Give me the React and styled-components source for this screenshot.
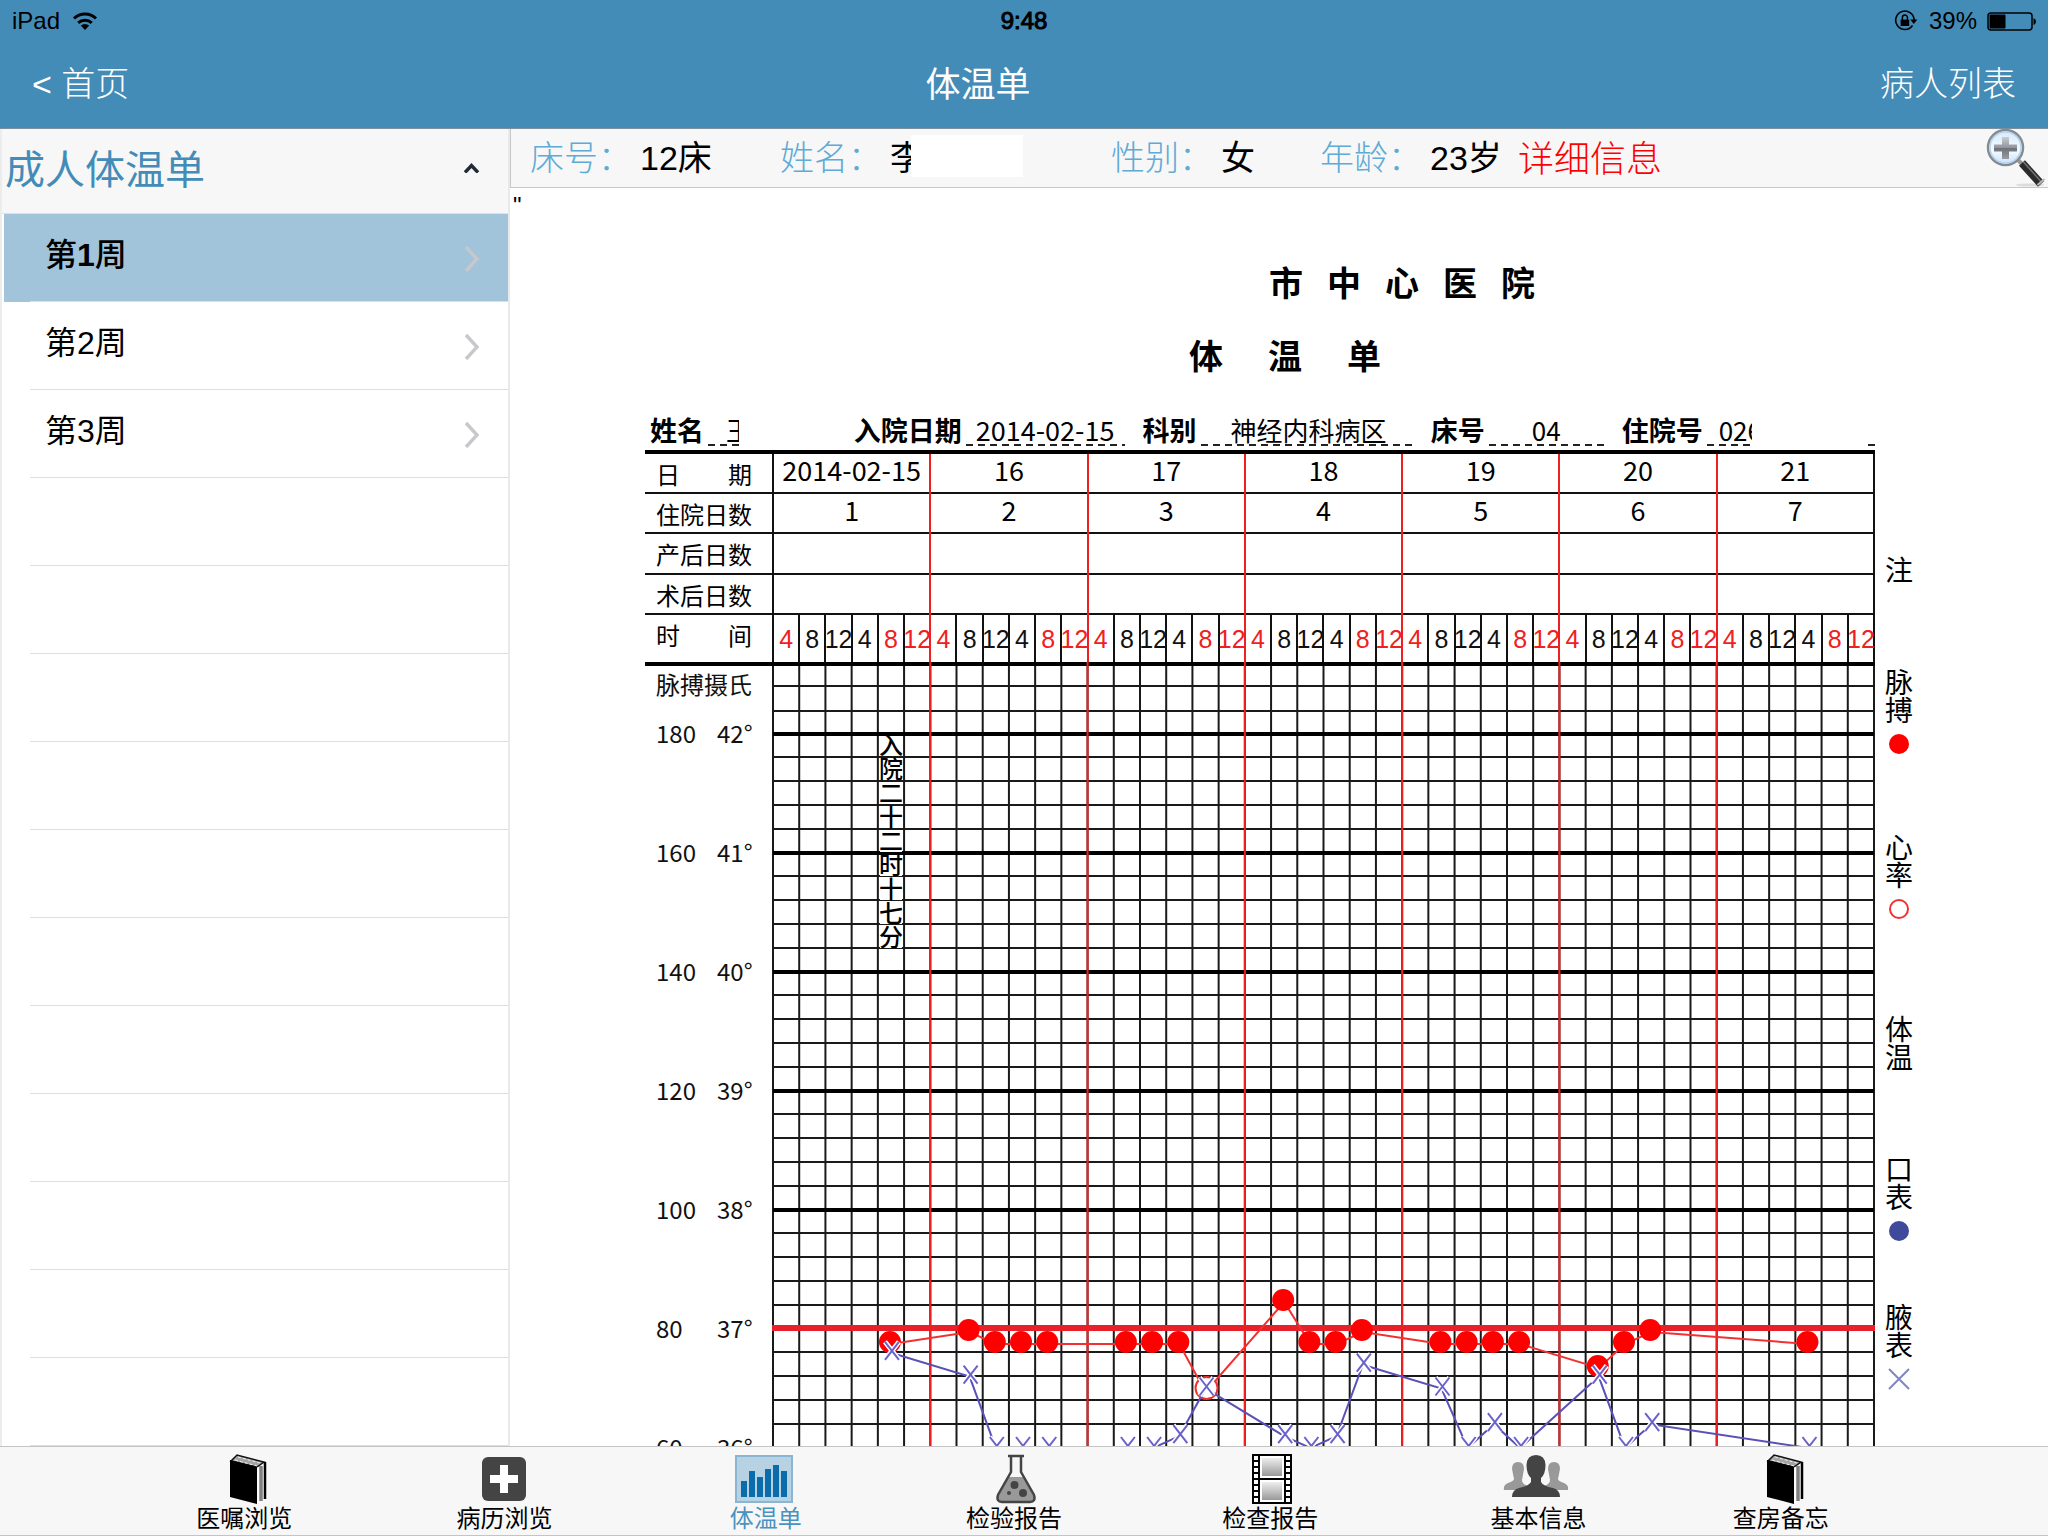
import React, { useState } from "react";
import styled, { createGlobalStyle } from "styled-components";

const weeks = [1, 2, 3];
const emptyRows = 11;

const days = ["2014-02-15", "16", "17", "18", "19", "20", "21"];
const hours = ["4", "8", "12", "4", "8", "12"];
const redHours = [0, 4, 5];

// [slot, value], six slots per day
const pulse = [
  [4, 78], [7, 80], [8, 78], [9, 78], [10, 78], [13, 78], [14, 78], [15, 78],
  [16, 70], [19, 85], [20, 78], [21, 78], [22, 80], [25, 78], [26, 78],
  [27, 78], [28, 78], [31, 74], [32, 78], [33, 80], [39, 78],
];
const temps = [
  [4, 36.8], [7, 36.6], [8, 36], [9, 36], [10, 36], [13, 36], [14, 36],
  [15, 36.1], [16, 36.5], [19, 36.1], [20, 36], [21, 36.1], [22, 36.7],
  [25, 36.5], [26, 36], [27, 36.2], [28, 36], [31, 36.6], [32, 36],
  [33, 36.2], [39, 36],
];

const tabs = [
  { name: "医嘱浏览", icon: "book" },
  { name: "病历浏览", icon: "plus" },
  { name: "体温单", icon: "bars" },
  { name: "检验报告", icon: "flask" },
  { name: "检查报告", icon: "film" },
  { name: "基本信息", icon: "people" },
  { name: "查房备忘", icon: "book" },
];

const GlobalStyle = createGlobalStyle`
  * {
    box-sizing: border-box;
  }
  body {
    margin: 0;
    font-family: "Liberation Sans", "Noto Sans CJK SC", sans-serif;
    color: #000;
    background: #fff;
  }
  button {
    font: inherit;
    color: inherit;
    background: none;
    border: 0;
    padding: 0;
    cursor: pointer;
  }
  a {
    text-decoration: none;
  }
`;

const Page = styled.div`
  display: flex;
  flex-direction: column;
  height: 100vh;
  overflow: hidden;
`;

const TopBar = styled.header`
  background: #438cb8;
  border-bottom: 1px solid #7d8f9b;
`;

const StatusBar = styled.div`
  display: grid;
  grid-template-columns: 1fr auto 1fr;
  align-items: center;
  height: 42px;
  padding: 0 12px;
  font-size: 24px;
`;

const StatusGroup = styled.div`
  display: flex;
  align-items: center;
  justify-content: ${(props) => (props.$end ? "flex-end" : "flex-start")};
  gap: ${(props) => (props.$end ? "10px" : "12px")};
`;

const Clock = styled.span`
  -webkit-text-stroke: 1px #000;
`;

const NavBar = styled.nav`
  display: grid;
  grid-template-columns: 1fr auto 1fr;
  align-items: center;
  height: 86px;
  padding: 0 32px 8px;
  font-size: 34px;
  font-weight: 300;
  color: #fff;
`;

const NavTitle = styled.h1`
  margin: 0;
  padding-right: 92px;
  font-size: 35px;
  font-weight: 400;
`;

const NavLink = styled.a`
  color: #fff;
  justify-self: ${(props) => (props.$end ? "end" : "start")};
`;

const Body = styled.div`
  display: flex;
  flex: 1;
  min-height: 0;
`;

const Sidebar = styled.aside`
  flex: 0 0 510px;
  display: flex;
  flex-direction: column;
  overflow: hidden;
  border-left: 2px solid #ececec;
  border-right: 2px solid #e9e9e9;
`;

const GroupHeader = styled.button`
  flex: 0 0 85px;
  display: flex;
  align-items: center;
  justify-content: space-between;
  padding: 0 28px 8px 3px;
  font-size: 40px;
  color: #438cb8;
  background: #f7f7f7;
  border-bottom: 1px solid #e0e0e0;
`;

const WeekList = styled.ul`
  margin: 0;
  padding: 0 0 0 2px;
  list-style: none;
`;

const WeekRow = styled.li`
  display: flex;
  height: 88px;
  padding-left: 26px;
  background: ${(props) => (props.$active ? "#a2c4da" : "#fff")};
`;

const WeekButton = styled.button`
  flex: 1;
  display: flex;
  align-items: center;
  justify-content: space-between;
  padding: 0 27px 0 15px;
  font-size: 32px;
  font-weight: ${(props) => (props.$active ? 500 : 400)};
  border-bottom: 1px solid #dedee0;
`;

const EmptyRow = styled(WeekRow)`
  &::before {
    content: "";
    flex: 1;
    border-bottom: 1px solid #dedee0;
  }
`;

const WeekName = styled.span`
  padding-bottom: 12px;
`;

const Content = styled.main`
  flex: 1;
  min-width: 0;
  display: flex;
  flex-direction: column;
  overflow: hidden;
`;

const PatientBar = styled.section`
  flex: 0 0 59px;
  display: flex;
  align-items: center;
  padding: 0 2px 0 19px;
  font-size: 34px;
  background: #f7f7f7;
  border-left: 1px solid #c8c8c8;
  border-bottom: 1px solid #c8c8c8;
`;

const Item = styled.dl`
  display: flex;
  align-items: center;
  margin: 0;
  padding-bottom: 5px;
  min-width: ${(props) => props.$width}px;
  white-space: nowrap;
`;

const ItemLabel = styled.dt`
  width: 110px;
  font-weight: 300;
  color: #5eabd6;
`;

const ItemValue = styled.dd`
  margin: 0;
  ${(props) => props.$clip && `width: ${props.$clip}px; overflow: hidden;`}
`;

const Redacted = styled.span`
  width: 112px;
  height: 42px;
  background: #fff;
`;

const DetailLink = styled.a`
  padding-bottom: 5px;
  font-size: 36px;
  font-weight: 300;
  color: #f00;
`;

const ZoomButton = styled.button`
  display: flex;
  align-self: flex-start;
  margin-left: auto;
`;

const Stray = styled.div`
  flex: 0 0 31px;
  padding: 6px 0 0 3px;
  font-size: 24px;
  line-height: 24px;
`;

const SheetRow = styled.div`
  display: flex;
  align-items: flex-start;
  min-height: 0;
  padding-left: 135px;
`;

const Sheet = styled.section`
  flex: 1;
  min-width: 0;
  padding-top: 39px;
  font-family: "Noto Sans CJK SC", "Noto Sans", sans-serif;
`;

const SheetTitle = styled.h2`
  display: flex;
  justify-content: center;
  gap: ${(props) => props.$gap}px;
  margin: 0 0 ${(props) => props.$after}px;
  padding-left: ${(props) => props.$shift}px;
  font-size: 34px;
  line-height: 48px;
  font-weight: 700;
`;

const Fields = styled.div`
  display: flex;
  height: 36px;
  padding-left: 5px;
  font-size: 26px;
  line-height: 32px;
  white-space: nowrap;
`;

const FieldLabel = styled.span`
  font-size: 27px;
  font-weight: 700;
`;

const FieldValue = styled.span`
  width: ${(props) => props.$width}px;
  height: 32px;
  padding-left: ${(props) => props.$indent}px;
  margin-right: ${(props) => props.$after}px;
  font-size: ${(props) => (props.$digits ? 27 : 26)}px;
  overflow: ${(props) => (props.$clip ? "hidden" : "visible")};
  background: repeating-linear-gradient(90deg, #222 0 7px, #fff 7px 12px) 4px
    100% / 100% 2px no-repeat;
`;

const HeadTable = styled.table`
  display: block;
  border-top: 4px solid #000;
  font-size: 27px;
  tbody {
    display: block;
  }
`;

const HeadRow = styled.tr`
  display: grid;
  grid-template-columns: 127px repeat(42, 1fr);
  height: ${(props) => props.$height}px;
  border-bottom: ${(props) => (props.$last ? "0" : "2px")} solid #111;
  padding-right: 2px;
  background: linear-gradient(#111, #111) 100% 0 / 2px 100% no-repeat;
`;

const RowName = styled.th`
  padding: 2px 0 0 11px;
  font-size: 24px;
  line-height: 36px;
  font-weight: 400;
  text-align: left;
  white-space: pre;
`;

const DayCell = styled.td`
  grid-column: span 6;
  margin-bottom: -2px;
  padding: 0;
  border-left: 2px solid ${(props) => (props.$first ? "#111" : "#f02020")};
  line-height: 32px;
  text-align: center;
`;

const HourCell = styled.td`
  display: flex;
  justify-content: center;
  padding: 0;
  min-width: 0;
  border-left: 2px solid ${(props) => (props.$day ? "#f02020" : "#111")};
  color: ${(props) => (props.$red ? "#f02020" : "#111")};
  font-family: "Liberation Sans", sans-serif;
  font-size: 25px;
  line-height: 49px;
  white-space: nowrap;
`;

const Chart = styled.svg`
  display: block;
  width: 100%;
  height: auto;
`;

const VerticalNote = styled.text`
  writing-mode: vertical-rl;
  dominant-baseline: central;
  font-size: 24px;
  font-weight: 500;
`;

const Legend = styled.ul`
  flex: 0 0 173px;
  margin: 0;
  padding: 252px 0 0 8px;
  list-style: none;
  font-family: "Noto Sans CJK SC", sans-serif;
  font-size: 28px;
  line-height: 28px;
`;

const LegendItem = styled.li`
  display: flex;
  flex-direction: column;
  align-items: center;
  width: 32px;
  height: ${(props) => props.$height}px;
  margin-top: ${(props) => props.$gap}px;
  svg {
    margin-top: 10px;
  }
`;

const Vertical = styled.span`
  width: 28px;
  word-break: break-all;
`;

const TabBar = styled.nav`
  flex: 0 0 90px;
  display: grid;
  grid-template-columns: 260fr 260fr 262fr 234fr 278fr 258fr 226fr;
  padding: 0 154px 0 114px;
  background: #f7f7f7;
  border-top: 1px solid #c4c4c4;
  border-bottom: 1px solid #c4c4c4;
`;

const Tab = styled.button`
  display: flex;
  flex-direction: column;
  align-items: center;
  padding-top: 7px;
  font-size: 24px;
  line-height: 30px;
  color: ${(props) => (props.$active ? "#4a93c0" : "#000")};
  svg {
    display: block;
    overflow: visible;
  }
`;

const Wifi = () => (
  <svg width="26" height="20" viewBox="0 0 26 20" fill="none" stroke="#000">
    <path d="M2 7.5a16 16 0 0 1 22 0" strokeWidth="3" />
    <path d="M6.2 11.8a10 10 0 0 1 13.6 0" strokeWidth="3" />
    <path d="M13 19l-4.2-4.4a6 6 0 0 1 8.4 0z" fill="#000" stroke="none" />
  </svg>
);

const RotationLock = () => (
  <svg width="25" height="22" viewBox="0 0 25 22" fill="none" stroke="#000">
    <path d="M18.5 15.5a9.2 9.2 0 1 1 1.6-5" strokeWidth="1.6" />
    <path d="M16.2 9.6h7.2l-3.6 4.4z" fill="#000" stroke="none" />
    <rect x="6.6" y="9.6" width="8.6" height="6.4" fill="#000" stroke="none" />
    <path d="M8.4 10V7.6a2.5 2.5 0 0 1 5 0V10" strokeWidth="1.5" />
  </svg>
);

const Battery = () => (
  <svg width="49" height="19" viewBox="0 0 49 19">
    <rect x="1" y="1" width="44" height="17" rx="3" fill="none" stroke="#000" strokeWidth="1.5" />
    <rect x="2.5" y="2.5" width="16" height="14" rx="1" fill="#000" />
    <path d="M46.5 6q2.5 1 2.5 3.5t-2.5 3.5z" />
  </svg>
);

const Chevron = () => (
  <svg width="18" height="28" viewBox="0 0 18 28" fill="none" stroke="#c7c7cc" strokeWidth="3.4">
    <path d="M3 3l11 12L3 27" />
  </svg>
);

const Caret = () => (
  <svg width="17" height="12" viewBox="0 0 17 12" fill="none" stroke="#222b35" strokeWidth="3.4">
    <path d="M2 11.5l6.5-7 6.5 7" />
  </svg>
);

const Magnifier = () => (
  <svg width="60" height="58" viewBox="0 0 60 58">
    <defs>
      <linearGradient id="lens" x1="0" y1="0" x2="0" y2="1">
        <stop offset="0" stopColor="#d5e9fb" />
        <stop offset="0.6" stopColor="#f4faff" />
        <stop offset="1" stopColor="#c4e0fa" />
      </linearGradient>
      <linearGradient id="cross" x1="0" y1="0" x2="0" y2="1">
        <stop offset="0" stopColor="#c9ccd0" />
        <stop offset="0.5" stopColor="#90949a" />
        <stop offset="0.51" stopColor="#6d7278" />
        <stop offset="1" stopColor="#9a9ea4" />
      </linearGradient>
    </defs>
    <ellipse cx="44" cy="56" rx="14" ry="1.6" fill="#ddd" />
    <path d="M32 31l5 5" stroke="#999" strokeWidth="4" />
    <path d="M36 34l19 21" stroke="#2b2b2b" strokeWidth="8" />
    <path d="M37.5 33l17 19" stroke="#777" strokeWidth="1.5" />
    <path d="M51.5 56l7-6" stroke="#bbb" strokeWidth="2" />
    <circle cx="19.5" cy="18.5" r="17.5" fill="url(#lens)" stroke="#858b93" strokeWidth="2.5" />
    <circle cx="19.5" cy="18.5" r="15.5" fill="none" stroke="#b7d4ee" strokeWidth="1.5" />
    <path d="M16 8h7v7.5h8v7h-8V30h-7v-7.5H8v-7h8z" fill="url(#cross)" />
  </svg>
);

const TabIcon = ({ name }) => {
  if (name === "book") {
    return (
      <svg width="46" height="50" viewBox="0 0 46 50">
        <path d="M9 7l8-6 26 7v36l-8 6L9 43z" fill="#f7f7f7" />
        <path d="M10 7l6-6 27 7-7 5z" fill="#a5a5a5" stroke="#111" strokeWidth="1.5" />
        <path d="M14 6l22 6M17 3l22 6" stroke="#eee" strokeWidth="1" strokeDasharray="3 2" />
        <path d="M9 6l27 7v37L9 43z" />
        <path d="M37.5 13v36" stroke="#fff" strokeWidth="2" />
        <path d="M40 12v35" stroke="#808080" strokeWidth="3.5" />
        <path d="M44 8v37" stroke="#000" strokeWidth="2.5" />
      </svg>
    );
  }
  if (name === "plus") {
    return (
      <svg width="46" height="50" viewBox="0 0 46 50">
        <rect x="1" y="3" width="44" height="44" rx="6" fill="#444" />
        <path d="M19 11h8v10h10v8H27v10h-8V29H9v-8h10z" fill="#fff" />
      </svg>
    );
  }
  if (name === "bars") {
    return (
      <svg width="62" height="50" viewBox="0 0 62 50">
        <rect x="1" y="2" width="56" height="46" fill="#b6d2e3" stroke="#8ab6d3" strokeWidth="2" />
        <path
          d="M6 27h6v16H6zM14 17h6v26h-6zM22 23h6v20h-6zM30 15h6v28h-6zM38 11h6v32h-6zM46 17h6v26h-6z"
          fill="#0a6cab"
        />
      </svg>
    );
  }
  if (name === "flask") {
    return (
      <svg width="36" height="50" viewBox="0 0 36 50">
        <path d="M13 23h14l11 20q2 5-4 5H6q-6 0-4-5z" fill="#999" />
        <path d="M12 2h16M15 2v16L2 41q-2 7 4 7h28q6 0 4-7L25 18V2" fill="none" stroke="#444" strokeWidth="2.5" />
        <circle cx="18.5" cy="31" r="4" fill="#444" />
        <circle cx="27" cy="39" r="4" fill="#444" />
        <circle cx="13" cy="39" r="2" fill="#444" />
      </svg>
    );
  }
  if (name === "film") {
    return (
      <svg width="36" height="50" viewBox="0 0 36 50">
        <defs>
          <linearGradient id="frame" x1="0" y1="0" x2="0" y2="1">
            <stop offset="0" stopColor="#eee" />
            <stop offset="1" stopColor="#999" />
          </linearGradient>
        </defs>
        <rect width="40" height="50" />
        <path d="M4 2v46M36 2v46" stroke="#fff" strokeWidth="4" strokeDasharray="4 2" />
        <path d="M8 2h24v22H8zM8 26h24v22H8z" fill="#fff" />
        <path d="M10 4h20v18H10z" fill="url(#frame)" />
        <path d="M10 28h20v18H10z" fill="url(#frame)" />
      </svg>
    );
  }
  return (
    <svg width="70" height="50" viewBox="0 0 70 50">
      <g fill="#999">
        <path d="M8 15q0-7 6-7t6 7l-2 11q0 4 6 6v4H0q-1-5 4-7 6-2 6-4z" />
        <path d="M56 15q0-7-6-7t-6 7l2 11q0 4-6 6v4h24q1-5-4-7-6-2-6-4z" />
      </g>
      <path
        d="M22.5 11Q23 1 32 1t9.5 10q0 9-4.5 13v4q2 4 12 6 7 2 7 9H8q0-7 7-9 10-2 12-6v-4q-4.5-4-4.5-13z"
        fill="#444"
      />
    </svg>
  );
};

const GRID_LEFT = 128;
const GRID_RIGHT = 1229;
const SLOT = (GRID_RIGHT - GRID_LEFT) / 42;
const DEGREE = 119;
const slotX = (slot) => GRID_LEFT + (slot + 0.5) * SLOT;
const lineY = (t) => 72 + (42 - t) * DEGREE;
const tempY = (t) => lineY(t) - 2;
const pulseY = (p) => 668 + (80 - p) * 6;
const toPath = (points, y) =>
  points.map(([slot, v], i) => `${i ? "L" : "M"}${slotX(slot)} ${y(v) + 2}`).join("");

const TemperatureChart = () => {
  const rows = [24, 49];
  for (let d = 42; d > 35; d--) {
    for (let i = 1; i < 5; i++) {
      rows.push(lineY(d) + i * 24 - 1);
    }
  }
  const slots = Array.from({ length: 43 }, (_, i) => i);
  return (
    <Chart viewBox="0 0 1230 860" role="img" aria-label="体温单">
      <path
        d={rows.map((y) => `M${GRID_LEFT} ${y}H${GRID_RIGHT}`).join("")}
        stroke="#1a1a1a"
        strokeWidth="2"
      />
      <path
        d={slots.map((s) => `M${GRID_LEFT + s * SLOT} 0V860`).join("")}
        stroke="#1a1a1a"
        strokeWidth="2"
      />
      <path
        d={[42, 41, 40, 39, 38, 36].map((t) => `M${GRID_LEFT} ${lineY(t)}H${GRID_RIGHT}`).join("")}
        stroke="#000"
        strokeWidth="4"
      />
      <path d="M0 2H1230" stroke="#000" strokeWidth="4" />
      <path
        d={[1, 2, 3, 4, 5, 6].map((d) => `M${GRID_LEFT + d * 6 * SLOT} 0V860`).join("")}
        stroke="#f02020"
        strokeWidth="2"
      />
      <path d={`M${GRID_LEFT - 1} 666H${GRID_RIGHT + 1}`} stroke="#e8202a" strokeWidth="6" />

      <g fontSize="24" fill="#111">
        <text x="11" y="32">脉搏摄氏</text>
        {[42, 41, 40, 39, 38, 37, 36].map((t) => (
          <g key={t}>
            <text x="11" y={lineY(t) + 9}>{180 - (42 - t) * 20}</text>
            <text x="72" y={lineY(t) + 9}>{t}°</text>
          </g>
        ))}
      </g>

      <g fill="#fff">
        {[0, 1, 2, 3, 4, 5, 6, 7, 8].map((i) => (
          <rect key={i} x={slotX(4) - 11} y={75 + i * 24} width="22" height="19" />
        ))}
      </g>
      <VerticalNote x={slotX(4)} y="71">入院二十二时十七分</VerticalNote>

      <path d={toPath(pulse, pulseY)} fill="none" stroke="#f23030" strokeWidth="2" />
      {pulse.map(([slot, v]) =>
        slot === 16 ? (
          <circle key={slot} cx={slotX(slot) + 1} cy={pulseY(v) - 2} r="11" fill="#fff" stroke="#f23030" strokeWidth="2" />
        ) : (
          <circle key={slot} cx={slotX(slot) - 1} cy={pulseY(v)} r="11" fill="#f00" />
        )
      )}
      <path d={toPath(temps, tempY)} fill="none" stroke="#5a50b8" strokeWidth="2" />
      {temps.map(([slot, v]) => {
        const x = slotX(slot) + 1;
        const y = tempY(v);
        const d = `M${x - 7} ${y - 9}l14 18m0 -18l-14 18`;
        return (
          <g key={slot}>
            <path d={d} stroke="#fff" strokeWidth="5" />
            <path d={d} stroke="#6a62cc" strokeWidth="2" />
          </g>
        );
      })}
    </Chart>
  );
};

const Mark = ({ type }) => (
  <svg width="22" height="22" viewBox="0 0 22 22">
    {type === "pulse" && <circle cx="11" cy="11" r="10" fill="#f00" />}
    {type === "heart" && <circle cx="11" cy="11" r="9" fill="none" stroke="#f23030" strokeWidth="2" />}
    {type === "mouth" && <circle cx="11" cy="11" r="10" fill="#3f4a9a" />}
    {type === "armpit" && <path d="M1 1l20 20M21 1L1 21" stroke="#7f86c0" strokeWidth="2" />}
  </svg>
);

const legend = [
  { name: "注", gap: 84, height: 28 },
  { name: "脉搏", gap: 84, height: 88, mark: "pulse" },
  { name: "心率", gap: 77, height: 88, mark: "heart" },
  { name: "体温", gap: 94, height: 56 },
  { name: "口表", gap: 84, height: 88, mark: "mouth" },
  { name: "腋表", gap: 60, height: 88, mark: "armpit" },
];

const SheetHead = () => (
  <HeadTable>
    <tbody>
      <HeadRow $height={40}>
        <RowName scope="row">日　　期</RowName>
        {days.map((day, i) => (
          <DayCell key={day} $first={i === 0}>{day}</DayCell>
        ))}
      </HeadRow>
      <HeadRow $height={40}>
        <RowName scope="row">住院日数</RowName>
        {days.map((day, i) => (
          <DayCell key={day} $first={i === 0}>{i + 1}</DayCell>
        ))}
      </HeadRow>
      <HeadRow $height={41}>
        <RowName scope="row">产后日数</RowName>
        {days.map((day, i) => (
          <DayCell key={day} $first={i === 0} />
        ))}
      </HeadRow>
      <HeadRow $height={40}>
        <RowName scope="row">术后日数</RowName>
        {days.map((day, i) => (
          <DayCell key={day} $first={i === 0} />
        ))}
      </HeadRow>
      <HeadRow $height={47} $last>
        <RowName scope="row">时　　间</RowName>
        {days.map((day, d) =>
          hours.map((hour, h) => (
            <HourCell key={day + h} $day={d > 0 && h === 0} $red={redHours.includes(h)}>
              {hour}
            </HourCell>
          ))
        )}
      </HeadRow>
    </tbody>
  </HeadTable>
);

const App = () => {
  const [week, setWeek] = useState(1);
  const [tab, setTab] = useState("体温单");
  const [open, setOpen] = useState(true);

  return (
    <Page>
      <GlobalStyle />
      <TopBar>
        <StatusBar>
          <StatusGroup>
            <span>iPad</span>
            <Wifi />
          </StatusGroup>
          <Clock>9:48</Clock>
          <StatusGroup $end>
            <RotationLock />
            <span>39%</span>
            <Battery />
          </StatusGroup>
        </StatusBar>
        <NavBar>
          <NavLink href="#home">&lt; 首页</NavLink>
          <NavTitle>体温单</NavTitle>
          <NavLink href="#patients" $end>病人列表</NavLink>
        </NavBar>
      </TopBar>

      <Body>
        <Sidebar>
          <GroupHeader onClick={() => setOpen(!open)} aria-expanded={open}>
            成人体温单
            <Caret />
          </GroupHeader>
          {open && (
            <WeekList>
              {weeks.map((n) => (
                <WeekRow key={n} $active={n === week}>
                  <WeekButton $active={n === week} onClick={() => setWeek(n)}>
                    <WeekName>第{n === week ? <b>{n}</b> : n}周</WeekName>
                    <Chevron />
                  </WeekButton>
                </WeekRow>
              ))}
              {Array.from({ length: emptyRows }, (_, i) => (
                <EmptyRow key={i} aria-hidden="true" />
              ))}
            </WeekList>
          )}
        </Sidebar>

        <Content>
          <PatientBar>
            <Item $width={250}>
              <ItemLabel>床号：</ItemLabel>
              <ItemValue>12床</ItemValue>
            </Item>
            <Item $width={331}>
              <ItemLabel>姓名：</ItemLabel>
              <ItemValue $clip={21}>李</ItemValue>
              <Redacted />
            </Item>
            <Item $width={209}>
              <ItemLabel>性别：</ItemLabel>
              <ItemValue>女</ItemValue>
            </Item>
            <Item $width={198}>
              <ItemLabel>年龄：</ItemLabel>
              <ItemValue>23岁</ItemValue>
            </Item>
            <DetailLink href="#detail">详细信息</DetailLink>
            <ZoomButton aria-label="放大">
              <Magnifier />
            </ZoomButton>
          </PatientBar>

          <Stray>"</Stray>

          <SheetRow>
            <Sheet>
              <SheetTitle $gap={24} $after={25} $shift={284}>
                {"市中心医院".split("").map((char) => (
                  <span key={char}>{char}</span>
                ))}
              </SheetTitle>
              <SheetTitle $gap={45} $after={35} $shift={50}>
                {"体温单".split("").map((char) => (
                  <span key={char}>{char}</span>
                ))}
              </SheetTitle>
              <Fields>
                <FieldLabel>姓名</FieldLabel>
                <FieldValue $width={35} $indent={22} $after={115} $clip>王</FieldValue>
                <FieldLabel>入院日期</FieldLabel>
                <FieldValue $width={165} $indent={14} $after={18} $digits>2014-02-15</FieldValue>
                <FieldLabel>科别</FieldLabel>
                <FieldValue $width={222} $indent={34} $after={15}>神经内科病区</FieldValue>
                <FieldLabel>床号</FieldLabel>
                <FieldValue $width={122} $indent={47} $after={16}>04</FieldValue>
                <FieldLabel>住院号</FieldLabel>
                <FieldValue $width={50} $indent={16} $after={112} $clip>026</FieldValue>
                <FieldValue $width={11} $indent={0} $after={0} />
              </Fields>
              <SheetHead />
              <TemperatureChart />
            </Sheet>
            <Legend>
              {legend.map((item) => (
                <LegendItem key={item.name} $gap={item.gap} $height={item.height}>
                  <Vertical>{item.name}</Vertical>
                  {item.mark && <Mark type={item.mark} />}
                </LegendItem>
              ))}
            </Legend>
          </SheetRow>
        </Content>
      </Body>

      <TabBar>
        {tabs.map((item) => (
          <Tab key={item.name} $active={item.name === tab} onClick={() => setTab(item.name)}>
            <TabIcon name={item.icon} />
            {item.name}
          </Tab>
        ))}
      </TabBar>
    </Page>
  );
};

export default App;
